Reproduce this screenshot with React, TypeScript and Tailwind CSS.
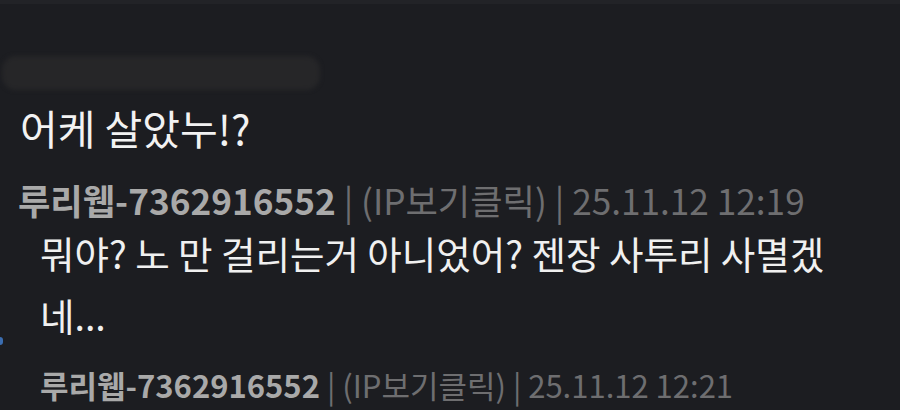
import React from "react";

export default function App() {
  const font = { fontFamily: '"Noto Sans CJK KR", "Noto Sans", sans-serif' };
  return (
    <div
      className="w-[900px] h-[410px] overflow-hidden bg-[#1c1d21] relative"
      style={font}
    >
      <div className="h-[4px] bg-[#222327]" />
      {/* redacted blurred bar */}
      <div className="mt-[52px] ml-[2px] w-[318px] h-[34px] rounded-[14px] bg-[#262628] blur-[2px]" />
      <div className="pl-[20px] mt-[12px] text-[41px] leading-[50px] text-[#f2f2f2] whitespace-nowrap">
        어케 살았누!?
      </div>
      <div className="pl-[18px] mt-[28px] text-[35.2px] leading-[40px] whitespace-nowrap">
        <span className="font-bold text-[#a9a9a9]">루리웹-7362916552</span>
        <span className="text-[#6e6e70]"> | (IP보기클릭) | 25.11.12 12:19</span>
      </div>
      <div className="pl-[40px] mt-[2px] text-[37.5px] leading-[62px] text-[#f0f0f0] whitespace-nowrap">
        뭐야? 노 만 걸리는거 아니었어? 젠장 사투리 사멸겠
        <br />
        네...
      </div>
      <div className="pl-[40px] mt-[19px] text-[31px] leading-[40px] whitespace-nowrap">
        <span className="font-bold text-[#a9a9a9]">루리웹-7362916552</span>
        <span className="text-[#6e6e70]"> | (IP보기클릭) | 25.11.12 12:21</span>
      </div>
      <div className="absolute left-[-3px] top-[337px] w-[6px] h-[8px] rounded-full bg-[#3b6db0]" />
    </div>
  );
}
